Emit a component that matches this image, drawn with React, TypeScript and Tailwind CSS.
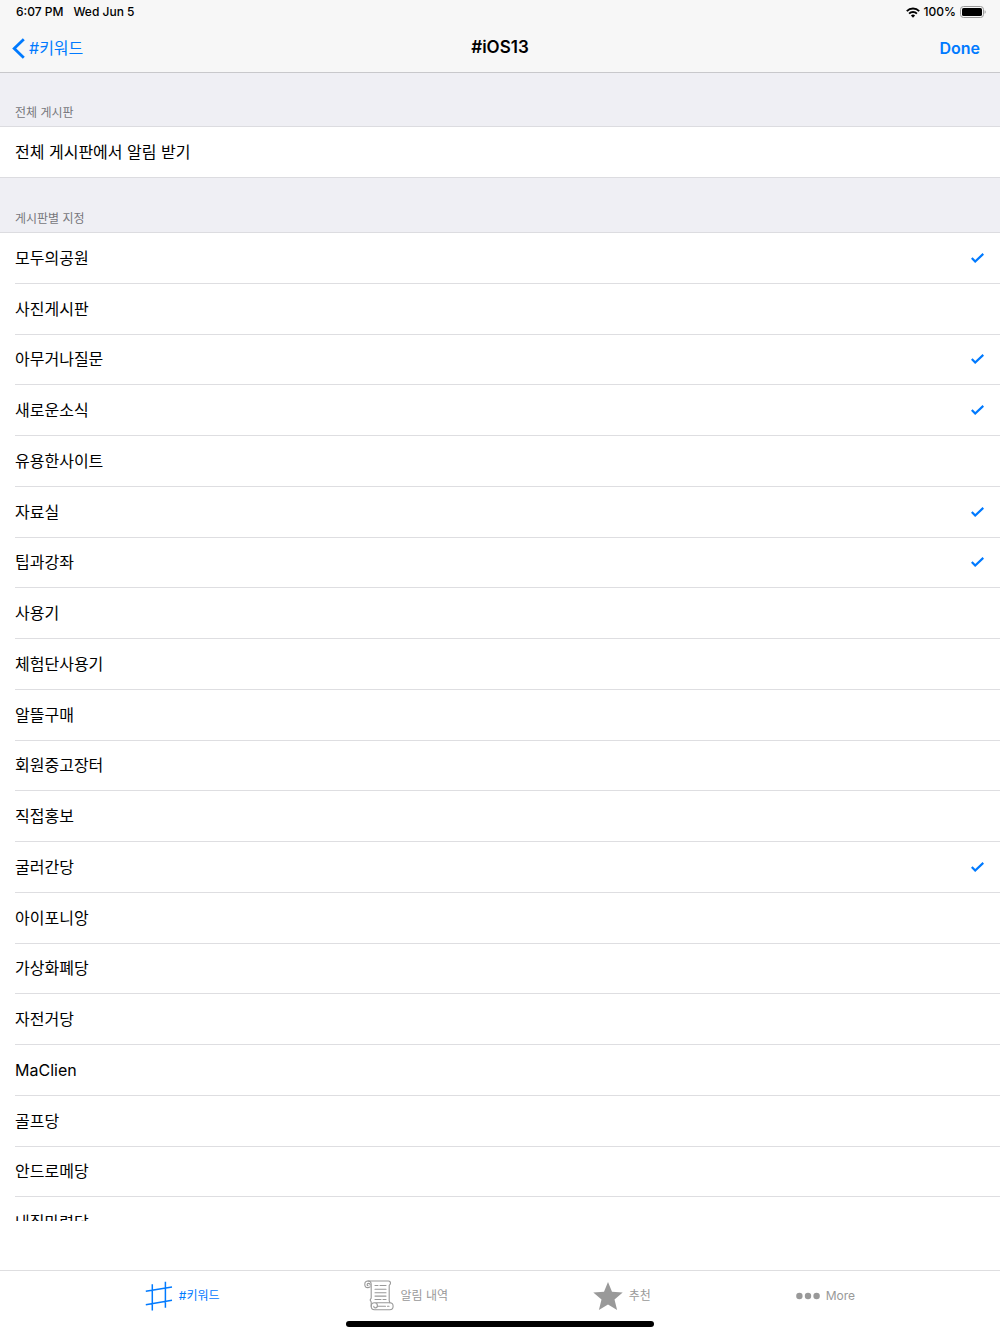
import { useState } from "react";

const BOARDS = [
  "모두의공원",
  "사진게시판",
  "아무거나질문",
  "새로운소식",
  "유용한사이트",
  "자료실",
  "팁과강좌",
  "사용기",
  "체험단사용기",
  "알뜰구매",
  "회원중고장터",
  "직접홍보",
  "굴러간당",
  "아이포니앙",
  "가상화폐당",
  "자전거당",
  "MaClien",
  "골프당",
  "안드로메당",
  "내집마련당",
];

const INITIAL_SELECTED = ["모두의공원", "아무거나질문", "새로운소식", "자료실", "팁과강좌", "굴러간당"];

function WifiIcon() {
  return (
    <svg width="14" height="11" viewBox="0 0 14 11" fill="none" stroke="currentColor" strokeWidth="1.9" aria-hidden="true">
      <path d="M.8 4.100a8.800 8.800 0 0 1 12.400 0" />
      <path d="M3.100 6.600a5.500 5.500 0 0 1 7.800 0" />
      <path d="M7 10.700 4.900 8.500a3 3 0 0 1 4.200 0z" fill="currentColor" stroke="none" />
    </svg>
  );
}

function BatteryIcon() {
  return (
    <svg width="26" height="12" viewBox="0 0 26 12" fill="none" aria-hidden="true">
      <rect x="0.5" y="0.5" width="23" height="11" rx="3" stroke="#9a9a9a" />
      <rect x="2" y="2" width="20" height="8" rx="1.6" fill="#000" />
      <path d="M24.6 4.2c.8.3 1.1 1 1.1 1.8s-.3 1.5-1.1 1.8z" fill="#9a9a9a" />
    </svg>
  );
}

function BackIcon() {
  return (
    <svg width="13" height="21" viewBox="0 0 13 21" fill="none" stroke="currentColor" strokeWidth="2.8" aria-hidden="true">
      <path d="M11.8 1.2 2.2 10.5l9.6 9.3" />
    </svg>
  );
}

function HashIcon() {
  return (
    <svg width="28" height="30" viewBox="0 0 28 30" fill="none" stroke="currentColor" strokeWidth="1.5" aria-hidden="true">
      <path d="M7.3 3.2V29.5M20.4.8v26M.8 10.3 27 6M.8 23.8 27 19.3" />
    </svg>
  );
}

function ScrollIcon() {
  return (
    <svg width="30" height="31" viewBox="0 0 30 31" fill="none" stroke="currentColor" strokeWidth="1.1" strokeLinecap="round" strokeLinejoin="round" aria-hidden="true">
      <path d="M4 1h20.500c1.300 0 2 1 2 2.200 0 1-.7 1.700-1.300 2.200v15.200c0 .8.600 1.200.600 2.200" />
      <path d="M4 1C2 1 .8 2.400.8 4.200c0 2 1.200 3.400 2.900 3.400.900 0 1.700-.3 2.300-.8M4 1c2 0 3.200 1.400 3.200 3.600v13.300c0 .9-1 1.200-1 2.200s1 1.200 1 2.100v4" />
      <path d="M6.200 5.100c0-1-.7-1.700-1.600-1.700-.9 0-1.500.6-1.500 1.300 0 .6.400 1 1 1" />
      <path d="M10.500 22.800h15.300c1.900 0 3.300 1.500 3.300 3.400s-1.400 3.500-3.300 3.500H10.500c-1.900 0-3.300-1.600-3.300-3.500s1.400-3.400 3.300-3.400c1.700 0 2.900 1.200 2.900 2.900 0 1.300-.9 2.200-2 2.200-1 0-1.600-.7-1.600-1.500" />
      <path d="M13.300 26.300h8.200M23.500 26.300h1.500M11 5.500h3M16 5.500h6M11 9.200h11M11 12.700h11M11 16.100h11M11 19.500h6M19 19.500h3" />
    </svg>
  );
}

function StarIcon() {
  return (
    <svg width="30" height="28" viewBox="0 0 30 28" fill="currentColor" aria-hidden="true">
      <path d="m15 0 4 9.800 10.700.8-8.200 7 2.600 10.400L15 22.400 5.900 28l2.600-10.400-8.200-7 10.700-.8z" />
    </svg>
  );
}

function MoreIcon() {
  return (
    <svg width="24" height="8" viewBox="0 0 24 8" fill="currentColor" aria-hidden="true">
      <circle cx="3.4" cy="4" r="3.2" />
      <circle cx="12" cy="4" r="3.2" />
      <circle cx="20.6" cy="4" r="3.2" />
    </svg>
  );
}

const TABS = [
  { label: "#키워드", Icon: HashIcon },
  { label: "알림 내역", Icon: ScrollIcon },
  { label: "추천", Icon: StarIcon },
  { label: "More", Icon: MoreIcon },
];

interface BoardRowProps {
  name: string;
  checked: boolean;
  onToggle: () => void;
}

function BoardRow({ name, checked, onToggle }: BoardRowProps) {
  return (
    <label className="relative flex h-full cursor-pointer items-center justify-between pr-4">
      <span>{name}</span>
      <input type="checkbox" checked={checked} onChange={onToggle} className="peer sr-only" />
      <svg
        className="hidden text-[#007aff] peer-checked:block"
        width="13"
        height="10"
        viewBox="0 0 13 10"
        fill="none"
        stroke="currentColor"
        strokeWidth="2.2"
        aria-hidden="true"
      >
        <path d="m.8 5 3.400 3.500L12.300.9" />
      </svg>
    </label>
  );
}

export default function App() {
  const [all, setAll] = useState(false);
  const [selected, setSelected] = useState(INITIAL_SELECTED);
  const [tab, setTab] = useState("#키워드");

  const toggle = (name: string) => {
    setSelected((prev) => (prev.includes(name) ? prev.filter((n) => n !== name) : [...prev, name]));
  };

  return (
    <div className="flex h-screen flex-col bg-white font-['Inter','Noto_Sans_CJK_KR',sans-serif] text-base text-black">
      <header className="border-b border-[#c8c8cb] bg-[#f7f7f7]">
        {/* Status bar */}
        <div className="flex h-6 items-center justify-between pr-[14px] pl-4 text-xs font-medium">
          <div className="flex gap-2.5">
            <span>6:07 PM</span>
            <span>Wed Jun 5</span>
          </div>
          <div className="flex items-center gap-1">
            <WifiIcon />
            <span>100%</span>
            <BatteryIcon />
          </div>
        </div>

        {/* Navigation bar */}
        <nav className="grid h-12 grid-cols-3 items-center">
          <a href="#keywords" className="flex items-center gap-1 pl-3 text-[#007aff]">
            <BackIcon />
            <span>#키워드</span>
          </a>
          <h1 className="text-center text-[17px] font-semibold">#iOS13</h1>
          <button type="button" className="justify-self-end pr-5 font-semibold text-[#007aff]">
            Done
          </button>
        </nav>
      </header>

      <main className="min-h-0 flex-1 overflow-y-auto bg-[#efeff4] [scrollbar-width:none]">
        <section>
          <h2 className="flex h-[54px] items-end border-b border-[#dcdce0] px-[15px] pb-[3px] text-xs leading-5 text-[#77777c]">
            전체 게시판
          </h2>
          <div className="h-[51px] border-b border-[#dcdce0] bg-white pl-[15px]">
            <BoardRow name="전체 게시판에서 알림 받기" checked={all} onToggle={() => setAll(!all)} />
          </div>
        </section>

        <section>
          <h2 className="flex h-[55px] items-end border-b border-[#dcdce0] px-[15px] pb-[3px] text-xs leading-5 text-[#77777c]">
            게시판별 지정
          </h2>
          <ul className="grid h-[1015px] auto-rows-fr bg-white pl-[15px]">
            {BOARDS.map((name) => (
              <li key={name} className="border-b border-[#dedee1]">
                <BoardRow name={name} checked={selected.includes(name)} onToggle={() => toggle(name)} />
              </li>
            ))}
          </ul>
        </section>
      </main>

      <footer className="pt-[49px]">
        <nav className="flex h-[50px] items-center justify-evenly border-t border-[#dedee0]">
          {TABS.map(({ label, Icon }) => (
            <button
              key={label}
              type="button"
              onClick={() => setTab(label)}
              className={`flex items-center gap-1.5 text-xs ${tab === label ? "text-[#007aff]" : "text-[#999999]"}`}
            >
              <Icon />
              <span>{label}</span>
            </button>
          ))}
        </nav>
        {/* Home indicator */}
        <div className="flex h-[14px] justify-center">
          <div className="mt-px h-[6px] w-[308px] rounded-full bg-black" />
        </div>
      </footer>
    </div>
  );
}
